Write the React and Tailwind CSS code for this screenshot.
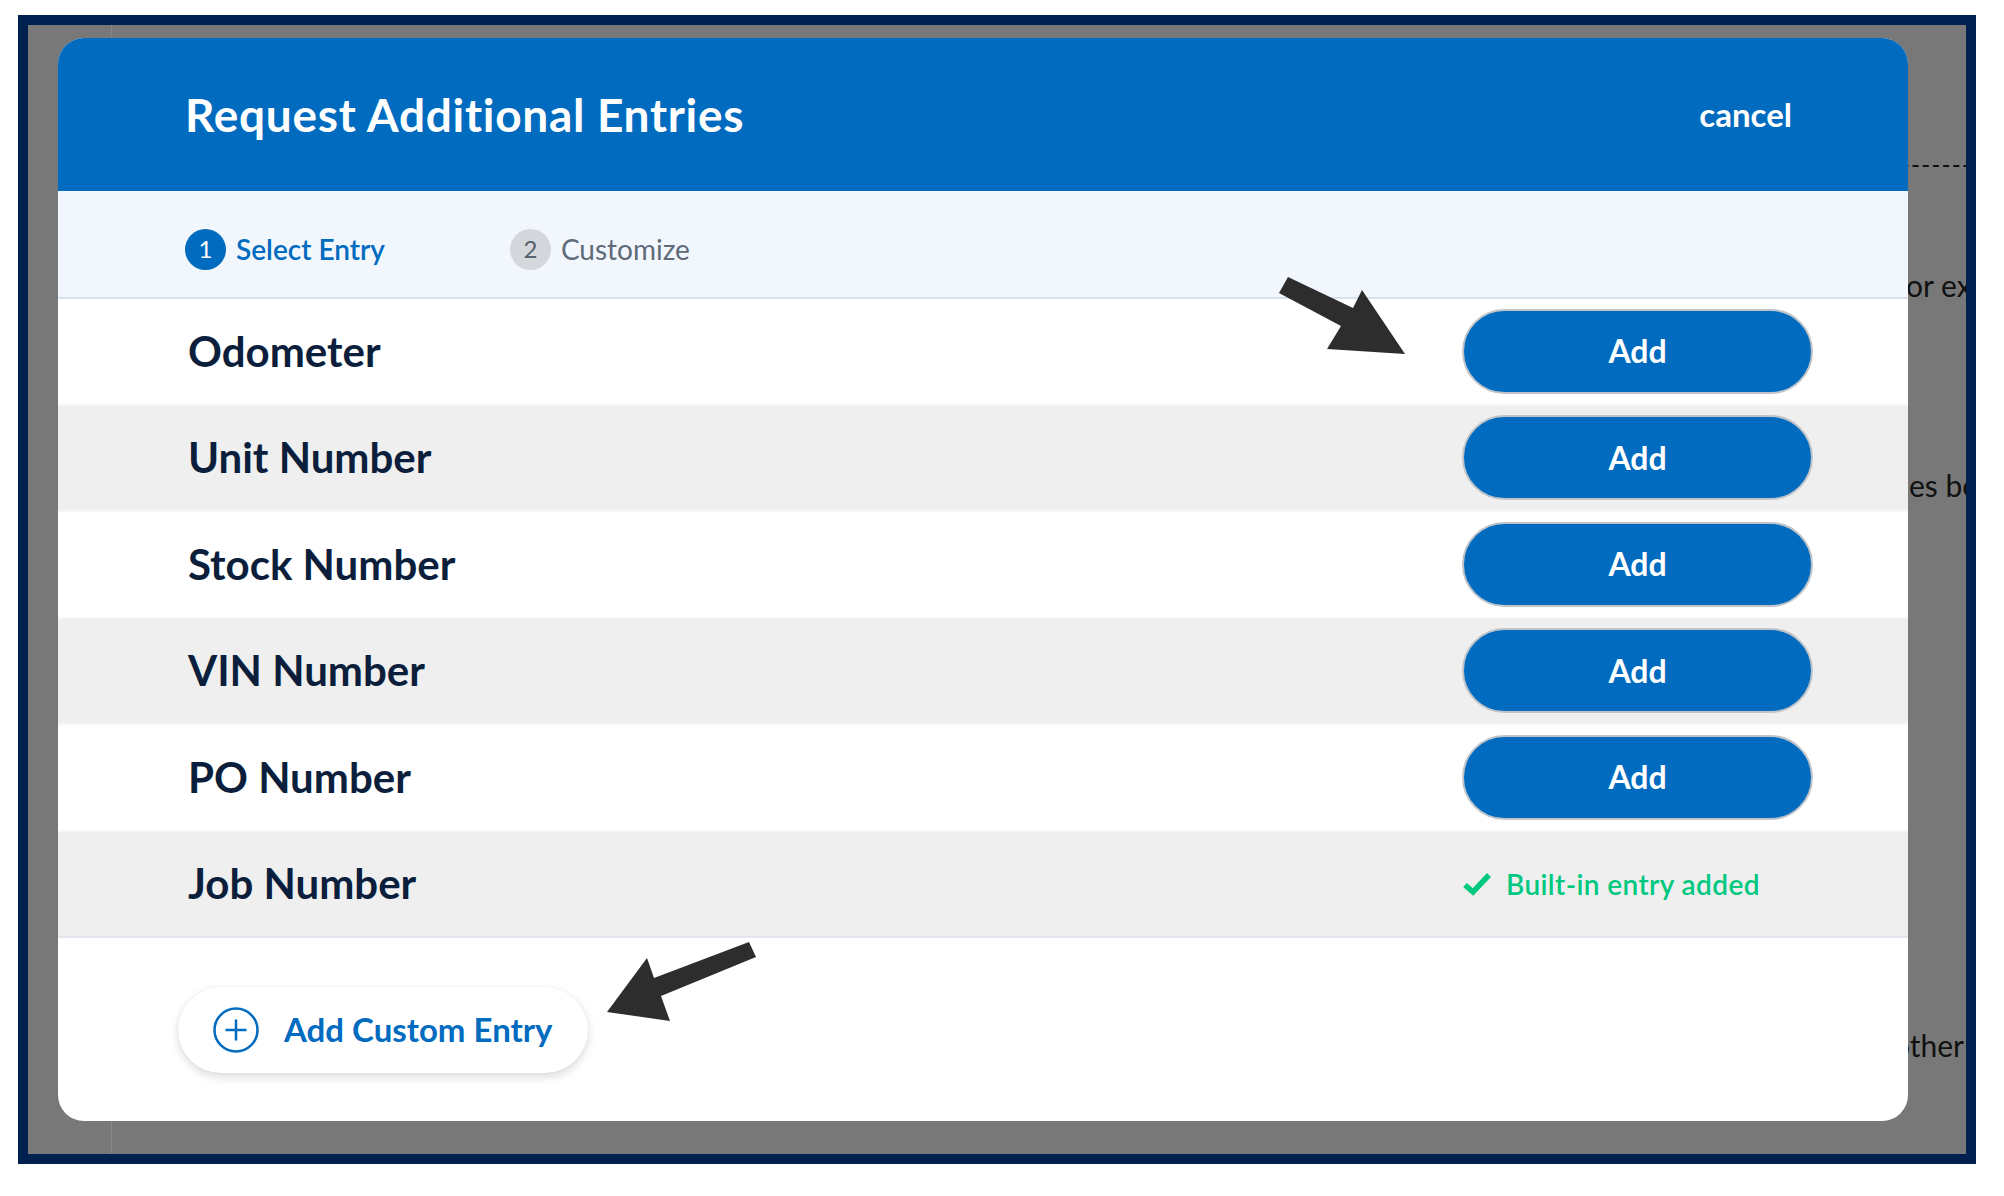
const entries = [
  { name: "Odometer", added: false },
  { name: "Unit Number", added: false },
  { name: "Stock Number", added: false },
  { name: "VIN Number", added: false },
  { name: "PO Number", added: false },
  { name: "Job Number", added: true },
];

function CheckIcon() {
  return (
    <svg width="30" height="24" viewBox="0 0 30 24" fill="none">
      <path d="M3 13 L11 20 L27 3" stroke="#00c97f" strokeWidth="5.5" strokeLinejoin="miter" strokeLinecap="butt" />
    </svg>
  );
}

function PlusCircle() {
  return (
    <svg width="46" height="46" viewBox="0 0 46 46" fill="none">
      <circle cx="23" cy="23" r="21.5" stroke="#006bbf" strokeWidth="2.5" />
      <path d="M23 12.5 V33.5 M12.5 23 H33.5" stroke="#006bbf" strokeWidth="2.5" />
    </svg>
  );
}

function EntryRow({ entry, index, last }) {
  const shaded = index % 2 === 1;
  return (
    <div
      className={
        "flex h-[106.5px] items-center justify-between border-b-2 pl-[130px] pr-[95px] " +
        (shaded ? "bg-[#efefef] " : "bg-white ") +
        (last ? "border-[#e2e7ed]" : "border-[#f3f6fa]")
      }
    >
      <span className="text-[42px] font-bold text-[#0b1e3b]">{entry.name}</span>
      {entry.added ? (
        <div className="flex w-[351px] items-center gap-[14px]">
          <CheckIcon />
          <span className="text-[28px] font-semibold tracking-[0.4px] text-[#00c97f]">Built-in entry added</span>
        </div>
      ) : (
        <button className="h-[85px] w-[351px] rounded-full border-2 border-[#bfc4ca] bg-[#006bbf] text-[32px] font-bold text-white">
          Add
        </button>
      )}
    </div>
  );
}

export default function App() {
  return (
    <div className="relative h-[1196px] w-[2004px] overflow-hidden bg-white pl-[18px] pt-[15px] font-['Lato',sans-serif]">
      <div className="relative h-[1149px] w-[1958px] overflow-hidden border-[10px] border-[#00204f] bg-[#787878]">
        {/* page behind the overlay */}
        <div className="flex h-full">
          <div className="w-[84px] shrink-0 border-r border-[#868686]" />
          <div className="flex flex-1 flex-col whitespace-nowrap text-[30px] leading-none text-[#111111]">
            <div className="ml-[1770px] mt-[140px] border-t-2 border-dashed border-[#111111]" />
            <div className="ml-[1794px] mt-[103px]">or example</div>
            <div className="ml-[1797px] mt-[170px]">es be</div>
            <div className="ml-[1781px] mt-[530px]">other</div>
          </div>
        </div>

        {/* modal */}
        <div className="absolute left-[30px] top-[13px] flex h-[1083px] w-[1850px] flex-col overflow-hidden rounded-[26px] bg-white">
          <div className="flex h-[153px] shrink-0 items-center justify-between bg-[#006bbf] pl-[127px] pr-[116px] text-white">
            <h1 className="text-[46px] font-bold tracking-[0.7px]">Request Additional Entries</h1>
            <button className="text-[33px] font-bold">cancel</button>
          </div>

          <div className="flex h-[108px] shrink-0 items-center border-b-2 border-[#d8e0e9] bg-[#f2f7fd] pl-[127px] pt-[10px]">
            <div className="flex items-center gap-[10px]">
              <span className="flex h-[41px] w-[41px] items-center justify-center rounded-full bg-[#006bbf] text-[24px] text-white">1</span>
              <span className="text-[28px] font-semibold text-[#006bbf]">Select Entry</span>
            </div>
            <div className="ml-[125px] flex items-center gap-[10px]">
              <span className="flex h-[41px] w-[41px] items-center justify-center rounded-full bg-[#d4d7db] text-[24px] text-[#56616d]">2</span>
              <span className="text-[28px] text-[#5f6b78]">Customize</span>
            </div>
          </div>

          <div className="flex flex-col">
            {entries.map((entry, i) => (
              <EntryRow key={entry.name} entry={entry} index={i} last={i === entries.length - 1} />
            ))}
          </div>

          <div className="pl-[120px] pt-[49px]">
            <button className="flex h-[86px] items-center gap-[25px] rounded-full bg-white pl-[35px] pr-[35px] shadow-[0_4px_10px_rgba(0,0,0,0.14),0_0_2px_rgba(0,0,0,0.08)]">
              <PlusCircle />
              <span className="text-[33px] font-bold text-[#006bbf]">Add Custom Entry</span>
            </button>
          </div>
        </div>
      </div>

      {/* annotation arrows */}
      <svg className="pointer-events-none absolute left-0 top-0" width="2004" height="1196">
        <polygon points="1288,277 1353,308 1362,290 1405,354 1327,349 1341,326 1279,293" fill="#2d2d2d" />
        <polygon points="749,942 654,978 647,958 607,1012 670,1021 661,996 756,957" fill="#2d2d2d" />
      </svg>
    </div>
  );
}
